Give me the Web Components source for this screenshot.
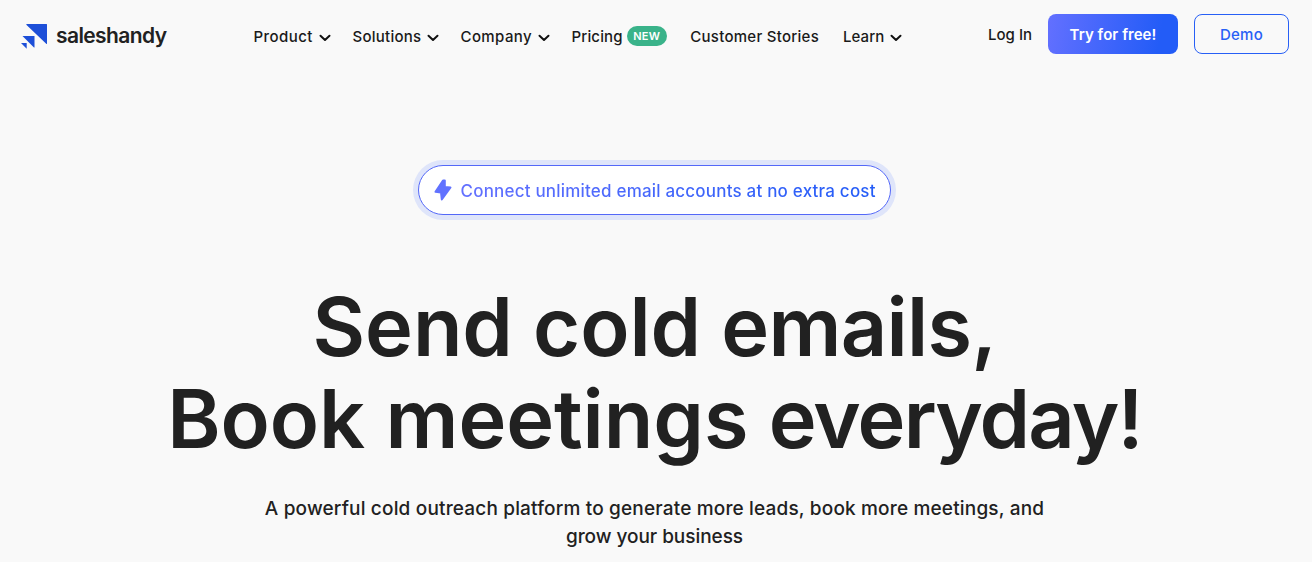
<!DOCTYPE html>
<html lang="en">
<head>
<meta charset="utf-8">
<title>Saleshandy</title>
<style>
body { margin: 0; background: #f9f9f9; color: #212121; font-family: Inter, "Liberation Sans", sans-serif; }
.tight { letter-spacing: -.7px; }
.tighter { letter-spacing: -1.8px; }
</style>
</head>
<body>
<sh-header>
  <sh-nav-item caret style="--w: 77.5px; --track: .45px">Product</sh-nav-item>
  <sh-nav-item caret style="--w: 86.5px; --track: .25px">Solutions</sh-nav-item>
  <sh-nav-item caret style="--w: 89.5px; --track: .4px">Company</sh-nav-item>
  <sh-nav-item badge="NEW" style="--w: 97.300px; --track: .15px">Pricing</sh-nav-item>
  <sh-nav-item style="--w: 131.2px; --track: .27px">Customer Stories</sh-nav-item>
  <sh-nav-item caret style="--track: .1px">Learn</sh-nav-item>
  <sh-nav-item slot="actions">Log In</sh-nav-item>
  <sh-button slot="actions" variant="primary">Try for free!</sh-button>
  <sh-button slot="actions">Demo</sh-button>
</sh-header>
<sh-hero>
  <sh-pill slot="pill">Connect unlimited email accounts at no extra cost</sh-pill>
  <span slot="first">Send cold <span class="tight">emails,</span></span>
  <span slot="second">Book meetings <span class="tighter">everyday!</span></span>
  <span slot="text">A powerful cold outreach platform to generate more leads, book more meetings, and</span>
  <span slot="text-end">grow your business</span>
</sh-hero>
<script>
/** Top bar: logo, default slot for navigation, `actions` slot on the right. */
class ShHeader extends HTMLElement {
  constructor() {
    super();
    this.attachShadow({ mode: 'open' }).innerHTML = `
      <style>
        :host { display: flex; height: 72px; }
        svg { width: 27px; height: 26px; }
        .logo { display: flex; flex: none; gap: 8px; padding: 23px 0 0 21px; width: 253.500px; box-sizing: border-box; }
        .logo span { font-size: 21px; font-weight: 600; line-height: 25px; letter-spacing: -.6px; }
        nav { display: flex; gap: 21.5px; padding-top: 25px; }
        .actions { display: flex; gap: 16px; margin-left: auto; padding: 14px 23px 0 0; }
        .actions ::slotted(sh-nav-item) { margin-top: 9px; }
      </style>
      <div class="logo">
        <svg viewBox="0 0 27 26" fill="#1d4fd8">
          <path d="M5.500 1h20q.5 0 .5.5v19.500q-.3 0-.8-.2L5.300 1.700zM1.500 13h12v11.500q-.5 0-.8-.3zM0 20h5.700v5.700z"/>
        </svg>
        <span>saleshandy</span>
      </div>
      <nav><slot></slot></nav>
      <div class="actions"><slot name="actions"></slot></div>`;
  }
}
customElements.define('sh-header', ShHeader);

/**
 * Navigation entry.
 * @attr caret - Shows the dropdown arrow.
 * @attr {string} badge - Text of the green badge.
 */
class ShNavItem extends HTMLElement {
  constructor() {
    super();
    this.attachShadow({ mode: 'open' }).innerHTML = `
      <style>
        :host { display: flex; flex: none; width: var(--w, auto); height: 24px; line-height: 24px; font-size: 15px; font-weight: 500; letter-spacing: var(--track, 0); white-space: nowrap; color: #1a1a1a; }
        svg { flex: none; width: 12px; height: 8px; margin: 9px 0 0 6px; }
        b { flex: none; height: 20px; width: 40px; margin: 1px 0 0 4px; border-radius: 10px; background: #3ab38a; color: #fff; font-size: 11px; font-weight: 600; line-height: 20px; text-align: center; }
      </style>
      <slot></slot>
      ${this.hasAttribute('caret') ? '<svg viewBox="0 0 12 8" fill="none" stroke="#111" stroke-width="2" stroke-linecap="round" stroke-linejoin="round"><path d="M1.500 1.800 6 6l4.500-4.200"/></svg>' : ''}
      ${this.hasAttribute('badge') ? `<b>${this.getAttribute('badge')}</b>` : ''}`;
  }
}
customElements.define('sh-nav-item', ShNavItem);

/** Call-to-action button; `variant="primary"` is filled. */
class ShButton extends HTMLElement {
  constructor() {
    super();
    this.attachShadow({ mode: 'open' }).innerHTML = `
      <style>
        :host { display: block; box-sizing: border-box; width: 95px; height: 40px; border: 1px solid #2860f6; border-radius: 8px; color: #2860f6; font-size: 15px; font-weight: 500; line-height: 40px; letter-spacing: .2px; text-align: center; }
        :host([variant="primary"]) { width: 130px; border: 0; line-height: 42px; letter-spacing: .05px; color: #fff; font-weight: 600; background: linear-gradient(100deg, #6370ff, #235cf7 85%); }
      </style>
      <slot></slot>`;
  }
}
customElements.define('sh-button', ShButton);

/** Announcement pill with a bolt icon and gradient text. */
class ShPill extends HTMLElement {
  constructor() {
    super();
    this.attachShadow({ mode: 'open' }).innerHTML = `
      <style>
        :host { display: flex; align-items: center; box-sizing: border-box; width: 473px; height: 50px; border: 1px solid #5468f8; border-radius: 25px; padding-left: 15px; background: #fff; box-shadow: 0 0 0 5px #dfe5fa; font-size: 17px; font-weight: 500; letter-spacing: .2px; white-space: nowrap; }
        svg { width: 18px; height: 22px; margin-right: 8.5px; }
        .label { padding-top: 2px; background: linear-gradient(90deg, #6370ff, #235cf7); -webkit-background-clip: text; background-clip: text; color: transparent; }
      </style>
      <svg viewBox="0 0 18 22" fill="#6172ff" stroke="#6172ff" stroke-width="2" stroke-linejoin="round"><path d="M9 1.500 1.500 12.800 7 13.500 7.800 20.500 16.500 8.500 10.800 8V1.500z"/></svg>
      <span class="label"><slot></slot></span>`;
  }
}
customElements.define('sh-pill', ShPill);

/** Centred hero: pill, two-line heading and supporting text. */
class ShHero extends HTMLElement {
  constructor() {
    super();
    this.attachShadow({ mode: 'open' }).innerHTML = `
      <style>
        :host { display: flex; flex-direction: column; align-items: center; padding: 93px 3px 0 0; }
        h1 { margin: 66px 0 0; font-size: 81px; font-weight: 600; line-height: 92px; text-align: center; white-space: nowrap; }
        p { margin: 30px 0 0; font-size: 19px; font-weight: 500; line-height: 28px; text-align: center; white-space: nowrap; }
        h1 slot, p slot { display: block; }
        slot[name="first"] { letter-spacing: -.1px; }
        slot[name="second"] { letter-spacing: -.05px; }
        slot[name="text"] { letter-spacing: .17px; }
        slot[name="text-end"] { letter-spacing: -.04px; }
      </style>
      <slot name="pill"></slot>
      <h1><slot name="first"></slot><slot name="second"></slot></h1>
      <p><slot name="text"></slot><slot name="text-end"></slot></p>`;
  }
}
customElements.define('sh-hero', ShHero);
</script>
</body>
</html>
